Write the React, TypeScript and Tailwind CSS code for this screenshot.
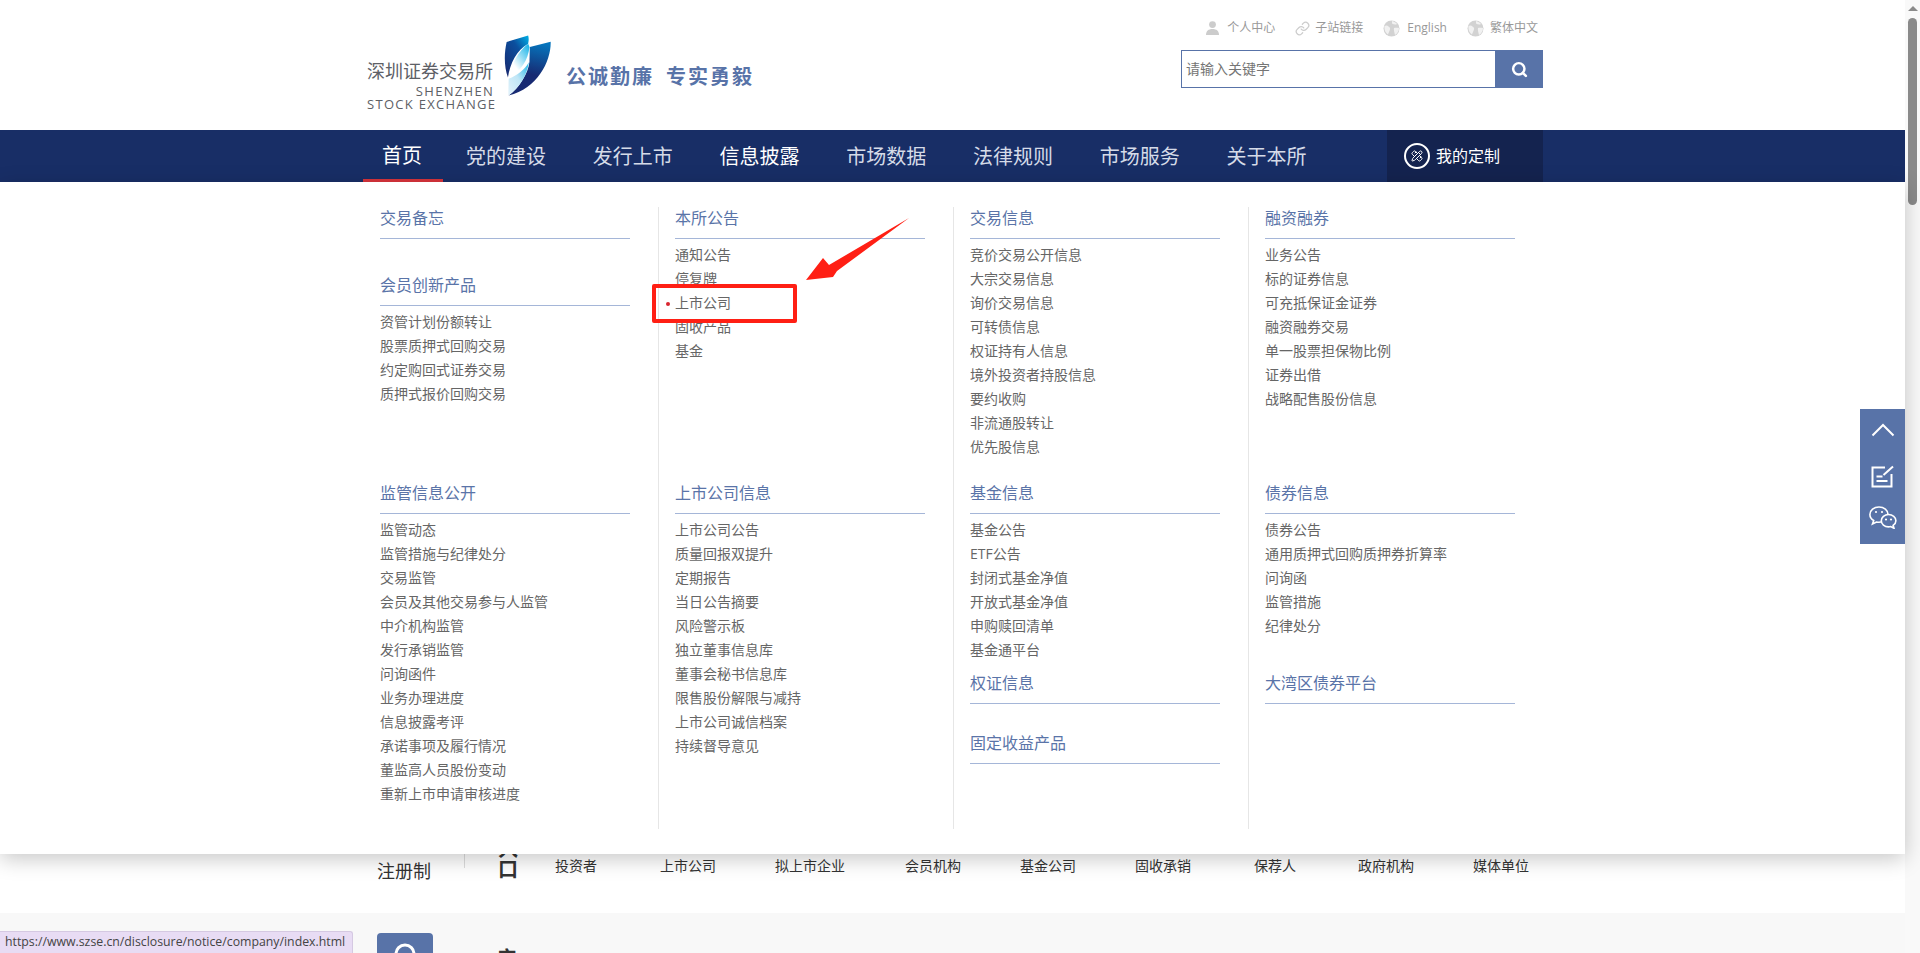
import { Link, PencilRuler, Search } from "lucide-react";

const navItems = ["党的建设", "发行上市", "信息披露", "市场数据", "法律规则", "市场服务", "关于本所"];
const audience = [
  { label: "投资者", className: "" },
  { label: "上市公司", className: "ml-[63px]" },
  { label: "拟上市企业", className: "ml-[59px]" },
  { label: "会员机构", className: "ml-[60px]" },
  { label: "基金公司", className: "ml-[59px]" },
  { label: "固收承销", className: "ml-[59px]" },
  { label: "保荐人", className: "ml-[63px]" },
  { label: "政府机构", className: "ml-[62px]" },
  { label: "媒体单位", className: "ml-[59px]" },
];

interface IGroup {
  title: string;
  items?: string[];
  className?: string;
}

const columns: { top: IGroup[]; bottom: IGroup[] }[] = [
  {
    top: [
      { title: "交易备忘" },
      {
        title: "会员创新产品",
        className: "mt-[35px]",
        items: ["资管计划份额转让", "股票质押式回购交易", "约定购回式证券交易", "质押式报价回购交易"],
      },
    ],
    bottom: [
      {
        title: "监管信息公开",
        items: [
          "监管动态",
          "监管措施与纪律处分",
          "交易监管",
          "会员及其他交易参与人监管",
          "中介机构监管",
          "发行承销监管",
          "问询函件",
          "业务办理进度",
          "信息披露考评",
          "承诺事项及履行情况",
          "董监高人员股份变动",
          "重新上市申请审核进度",
        ],
      },
    ],
  },
  {
    top: [{ title: "本所公告", items: ["通知公告", "停复牌", "上市公司", "固收产品", "基金"] }],
    bottom: [
      {
        title: "上市公司信息",
        items: [
          "上市公司公告",
          "质量回报双提升",
          "定期报告",
          "当日公告摘要",
          "风险警示板",
          "独立董事信息库",
          "董事会秘书信息库",
          "限售股份解限与减持",
          "上市公司诚信档案",
          "持续督导意见",
        ],
      },
    ],
  },
  {
    top: [
      {
        title: "交易信息",
        items: [
          "竞价交易公开信息",
          "大宗交易信息",
          "询价交易信息",
          "可转债信息",
          "权证持有人信息",
          "境外投资者持股信息",
          "要约收购",
          "非流通股转让",
          "优先股信息",
        ],
      },
    ],
    bottom: [
      {
        title: "基金信息",
        items: ["基金公告", "ETF公告", "封闭式基金净值", "开放式基金净值", "申购赎回清单", "基金通平台"],
      },
      { title: "权证信息", className: "mt-[10px]" },
      { title: "固定收益产品", className: "mt-[28px]" },
    ],
  },
  {
    top: [
      {
        title: "融资融券",
        items: ["业务公告", "标的证券信息", "可充抵保证金证券", "融资融券交易", "单一股票担保物比例", "证券出借", "战略配售股份信息"],
      },
    ],
    bottom: [
      {
        title: "债券信息",
        items: ["债券公告", "通用质押式回购质押券折算率", "问询函", "监管措施", "纪律处分"],
      },
      { title: "大湾区债券平台", className: "mt-[34px]" },
    ],
  },
];

const PersonIcon = () => (
  <svg width="13" height="14" viewBox="0 0 13 14" fill="#cccccc">
    <circle cx="6.5" cy="3.6" r="3.4" />
    <path d="M0 14c0-4 2.4-6 6.5-6S13 10 13 14z" />
  </svg>
);

const GlobeIcon = () => (
  <svg width="17" height="17" viewBox="0 0 17 17">
    <circle cx="8.5" cy="8.5" r="8" fill="#d2d2d2" />
    <path d="M1.5 6c2-1 3-.5 4 .5s2 1 1.5 3-1.5 3-2 5C2.500 13 1 10 1.500 6zM9 1c2 .5 4 1.500 5 3-1.500 1-3.500.5-5-.5zM11 8c1.500-.5 3-.5 5 0 0 3-1.500 5.500-4 7-.5-2-1.500-5-1-7z" fill="#f1f1f1" />
  </svg>
);

const WechatIcon = () => (
  <svg className="mt-[18px]" width="28" height="23" viewBox="0 0 28 23" fill="#5873a8" stroke="currentColor" strokeWidth="1.600">
    <path d="M10 1C5 1 .9 4.300.9 8.500c0 2.600 1.500 4.700 3.800 6L3.500 18l4-2c.8.2 1.600.3 2.500.3 5 0 9-3.400 9-7.800S15 1 10 1z" />
    <path d="M19.500 8.500c-4 0-7.200 2.800-7.200 6.200s3.200 6.200 7.200 6.200c.8 0 1.500-.1 2.200-.3l3.300 1.700-.9-3c1.700-1.100 2.800-2.800 2.800-4.600 0-3.400-3.300-6.200-7.400-6.200z" />
    <g fill="currentColor" stroke="none">
      <circle cx="7" cy="6" r="1.100" />
      <circle cx="13" cy="6" r="1.100" />
      <circle cx="17" cy="13.500" r="1.100" />
      <circle cx="22" cy="13.500" r="1.100" />
    </g>
  </svg>
);

const LogoMark = () => (
  <svg width="47" height="61" viewBox="672 104 142 184">
    <defs>
      <linearGradient id="blade-left" x1="0.9" y1="0" x2="0.1" y2="1">
        <stop offset="0" stopColor="#00a7e0" />
        <stop offset="0.35" stopColor="#0b4f9e" />
        <stop offset="1" stopColor="#17296f" />
      </linearGradient>
      <linearGradient id="blade-leaf" x1="0.9" y1="0" x2="0.1" y2="1">
        <stop offset="0" stopColor="#19b4e8" />
        <stop offset="0.7" stopColor="#ffffff" />
      </linearGradient>
      <linearGradient id="blade-right" x1="0.6" y1="0" x2="0.5" y2="0.6">
        <stop offset="0" stopColor="#0575bd" />
        <stop offset="1" stopColor="#172a72" />
      </linearGradient>
      <linearGradient id="blade-low" x1="1" y1="0" x2="0" y2="1">
        <stop offset="0" stopColor="#1cb4e8" />
        <stop offset="0.5" stopColor="#bfe6f6" />
        <stop offset="1" stopColor="#e4f3fb" />
      </linearGradient>
    </defs>
    <path d="M680 125L745 105C748 115 746 125 745 130C710 150 690 190 684 232C672 200 672 160 680 125Z" fill="url(#blade-left)" />
    <path d="M745 130C715 152 695 190 686 232C722 214 745 180 749 140Z" fill="url(#blade-leaf)" />
    <path d="M750 140L813 124C815 180 775 265 686 287C720 262 745 220 749 185Z" fill="url(#blade-right)" />
    <path d="M686 236C712 226 735 208 747 186C742 226 716 265 685 287Z" fill="url(#blade-low)" />
  </svg>
);

const MenuGroup = ({ group }: { group: IGroup }) => (
  <div className={group.className}>
    <h3 className="h-[32px] w-[250px] border-b border-[#a5b6d8] text-base leading-[22px] font-normal text-[#5a74a8]">
      {group.title}
    </h3>
    {group.items && (
      <ul className="mt-1">
        {group.items.map((item) => (
          <li key={item} className="relative h-6 text-sm leading-6 text-[#666666]">
            {item === "上市公司" && (
              <span className="absolute top-[11px] left-[-9px] size-[4px] rounded-full bg-[#d9252f]" />
            )}
            {item}
          </li>
        ))}
      </ul>
    )}
  </div>
);

// red marks drawn on top of the captured page
const Annotation = () => (
  <div className="absolute top-0 left-0 z-30">
    <div className="absolute top-[102px] left-[652px] h-[39px] w-[145px] rounded-[2px] border-[4px] border-[#ff1f14]" />
    <svg className="absolute top-[30px] left-[800px]" width="115" height="75" viewBox="800 212 115 75">
      <polygon points="806,280 823,258 829,265 909,218 837,271 833,277" fill="#ff1f14" />
    </svg>
  </div>
);

const App = () => {
  return (
    <div className="flex h-[953px] w-full overflow-hidden bg-white font-['Open_Sans','Noto_Sans_CJK_SC',sans-serif]">
      <div className="relative w-[1905px] shrink-0">
        <header className="flex h-[130px] pr-[362px] pl-[367px]">
          <div className="flex w-[127px] flex-col pt-[59px]">
            <div className="text-[18px] leading-[24px] text-[#5d6066]">深圳证券交易所</div>
            <div className="mt-[2px] text-right text-[13px] leading-[13px] tracking-[1.3px] text-[#5d6066]">SHENZHEN</div>
            <div className="text-[13px] leading-[13px] tracking-[1.3px] whitespace-nowrap text-[#5d6066]">STOCK EXCHANGE</div>
          </div>
          <div className="ml-[10px] pt-[35px]">
            <LogoMark />
          </div>
          <div className="mt-[63px] ml-[15px] flex h-[28px] gap-[12px] text-[20px] leading-[28px] font-bold tracking-[2px] text-[#5873a8]">
            <span>公诚勤廉</span>
            <span>专实勇毅</span>
          </div>
          <div className="ml-auto flex flex-col items-end pt-[18px]">
            <div className="flex h-5 items-center pr-[5px] text-xs text-[#999999]">
              <PersonIcon />
              <span className="ml-2">个人中心</span>
              <Link className="ml-5 text-[#cccccc]" size={15} strokeWidth={2} />
              <span className="ml-[5px]">子站链接</span>
              <span className="ml-5">
                <GlobeIcon />
              </span>
              <span className="ml-[7px]">English</span>
              <span className="ml-5">
                <GlobeIcon />
              </span>
              <span className="ml-[6px]">繁体中文</span>
            </div>
            <div className="mt-3 flex h-[38px] w-[362px]">
              <div className="flex grow items-center border border-[#5873a8] pl-[4px] text-sm text-[#757575]">
                请输入关键字
              </div>
              <div className="flex w-[47px] items-center justify-center bg-[#5873a8]">
                <Search className="text-white" size={17} strokeWidth={3.5} />
              </div>
            </div>
          </div>
        </header>

        <nav className="relative z-20 h-[52px] bg-[#182e66] pr-[362px] pl-[363px]">
          <div className="flex h-full items-center text-[20px] text-[#d5dbe8]">
            <div className="flex h-full w-[80px] items-center justify-center border-b-[3px] border-[#d9343c] pt-[3px] pr-[2px] text-white">
              首页
            </div>
            <div className="ml-[23px] flex gap-[46.75px] pt-[2px]">
              {navItems.map((item) => (
                <span key={item} className={item === "信息披露" ? "text-white" : ""}>
                  {item}
                </span>
              ))}
            </div>
            <div className="ml-auto flex h-full w-[156px] items-center bg-[#14234f] pl-[17px] text-base text-white">
              <span className="flex size-[26px] items-center justify-center rounded-full border-2 border-white">
                <PencilRuler size={12} />
              </span>
              <span className="ml-[6px]">我的定制</span>
            </div>
          </div>
          <div className="absolute top-full right-0 left-0 h-[672px] bg-white pt-[25px] pl-[363px] shadow-[0_5px_20px_rgba(0,0,0,0.22)]">
            <div className="flex h-[622px]">
              {columns.map((column, index) => (
                <div
                  key={column.top[0].title}
                  className={index === 0 ? "w-[295px] pl-[17px]" : "w-[295px] border-l border-[#e6e6e6] pl-4"}
                >
                  <div className="h-[275px]">
                    {column.top.map((group) => (
                      <MenuGroup key={group.title} group={group} />
                    ))}
                  </div>
                  {column.bottom.map((group) => (
                    <MenuGroup key={group.title} group={group} />
                  ))}
                </div>
              ))}
            </div>
            <Annotation />
          </div>
        </nav>

        <section className="flex h-[731px] pt-[658px] pl-[377px] text-[#333333]">
          <div className="mt-[19px] w-[87px] text-[18px] leading-6">注册制</div>
          <div className="h-[28px] w-px bg-[#dddddd]" />
          <div className="ml-[33px] flex w-[20px] flex-col text-[20px] leading-[20px] font-bold">
            <span>入</span>
            <span>口</span>
          </div>
          <div className="mt-[14px] ml-[37px] flex h-6 text-sm leading-6 whitespace-nowrap">
            {audience.map((item) => (
              <span key={item.label} className={item.className}>
                {item.label}
              </span>
            ))}
          </div>
        </section>

        <section className="flex h-[40px] bg-[#f8f8f8] pt-[20px] pl-[377px]">
          <div className="flex h-[60px] w-[56px] justify-center rounded bg-[#5873a8] pt-[10px]">
            <svg width="22" height="22" viewBox="0 0 22 22" fill="none" stroke="#ffffff" strokeWidth="3">
              <circle cx="11" cy="11" r="9" />
            </svg>
          </div>
          <div className="mt-[14px] ml-[64px] text-[20px] leading-6 font-bold text-[#333333]">产</div>
        </section>

        <div className="absolute bottom-0 left-0 z-30 flex h-[22px] w-[353px] items-center rounded-tr-[3px] border-t border-r border-[#d5c9e2] bg-[#e8dcf4] pl-[5px] text-[12.3px] whitespace-nowrap text-[#444444]">
          https://www.szse.cn/disclosure/notice/company/index.html
        </div>

        <aside className="absolute top-[409px] right-0 z-30 flex h-[135px] w-[45px] flex-col items-center bg-[#5873a8] text-white">
          <svg className="mt-[14px]" width="24" height="14" viewBox="0 0 24 14" fill="none" stroke="currentColor" strokeWidth="2">
            <path d="M1.500 12.500L12 2l10.500 10.500" />
          </svg>
          <svg className="mt-[28px]" width="23" height="23" viewBox="0 0 23 23" fill="none" stroke="currentColor" strokeWidth="2">
            <path d="M14 2.500H1.500v19h19V9" />
            <path d="M12.500 10L22 1.500" />
            <path d="M5.500 11.500h6M5.500 16h11" />
          </svg>
          <WechatIcon />
        </aside>
      </div>

      <div className="flex w-[15px] shrink-0 flex-col items-center bg-[#f9f9f9]">
        <div className="mt-[6px] size-0 border-x-[5px] border-b-[5px] border-x-transparent border-b-[#8a8a8a]" />
        <div className="mt-[7px] h-[187px] w-[9px] rounded-full bg-[#8a8a8a]" />
      </div>
    </div>
  );
};

export default App;
